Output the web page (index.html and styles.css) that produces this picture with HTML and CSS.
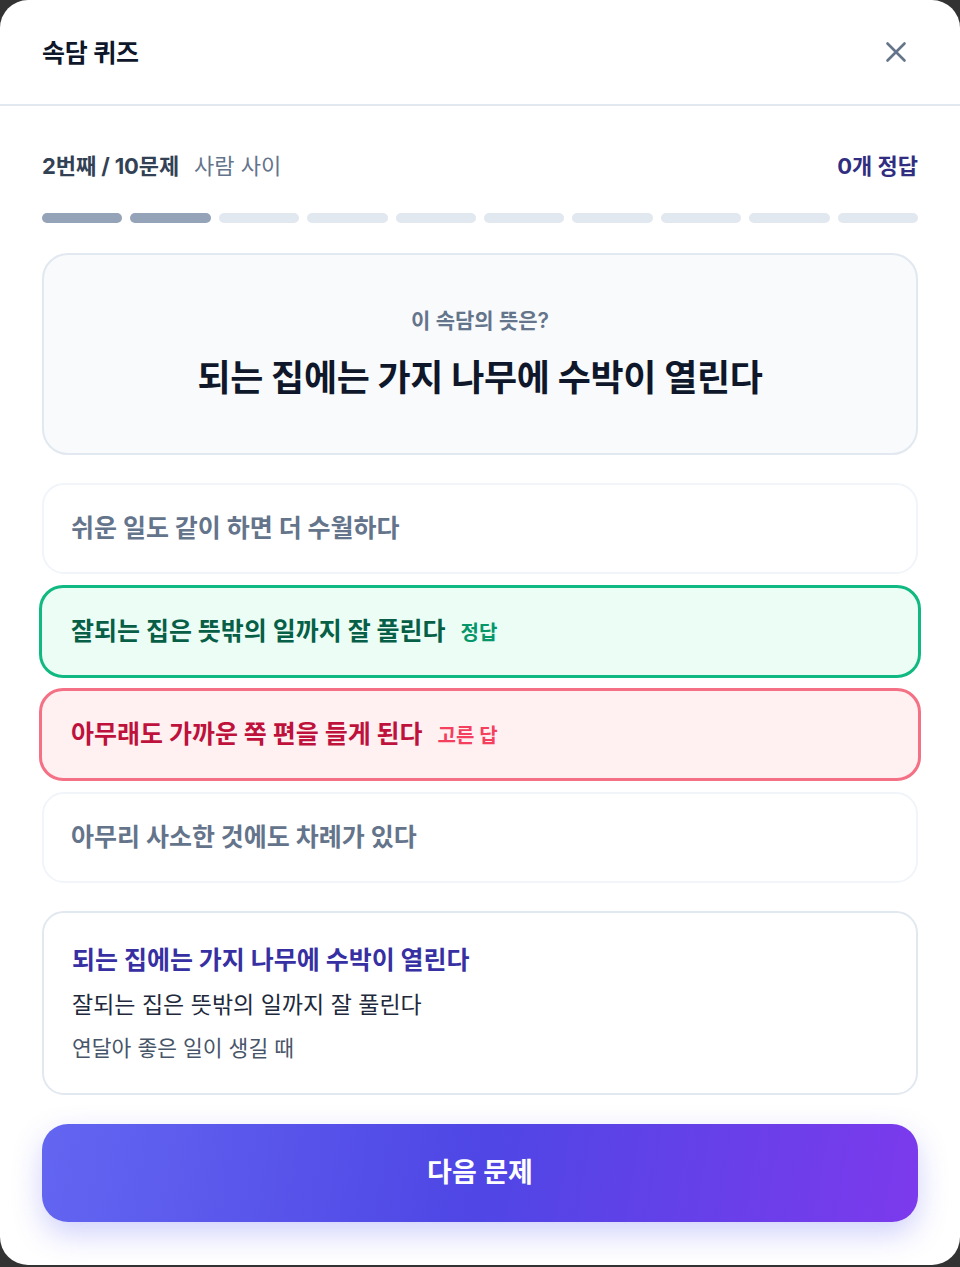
FILE: index.html
```html
<!DOCTYPE html>
<html lang="ko">
<head>
<meta charset="utf-8">
<title>속담 퀴즈</title>
<link rel="stylesheet" href="styles.css">
</head>
<body>
<div class="modal">
  <header class="modal-header">
    <h1 class="title">속담 퀴즈</h1>
    <button class="close" aria-label="닫기">
      <svg viewBox="0 0 22 22" width="22" height="22"><path d="M2.5 2.5 L19.5 19.5 M19.5 2.5 L2.5 19.5" stroke="#64748b" stroke-width="2.6" stroke-linecap="round" fill="none"/></svg>
    </button>
  </header>
  <main class="modal-body">
    <div class="progress-info">
      <div class="progress-left"><span class="count">2번째 / 10문제</span><span class="category">사람 사이</span></div>
      <div class="score">0개 정답</div>
    </div>
    <div class="progress-bar">
      <span class="seg done"></span><span class="seg done"></span><span class="seg"></span><span class="seg"></span><span class="seg"></span><span class="seg"></span><span class="seg"></span><span class="seg"></span><span class="seg"></span><span class="seg"></span>
    </div>
    <section class="question">
      <p class="question-label">이 속담의 뜻은?</p>
      <p class="proverb">되는 집에는 가지 나무에 수박이 열린다</p>
    </section>
    <div class="options">
      <div class="option">쉬운 일도 같이 하면 더 수월하다</div>
      <div class="option correct">잘되는 집은 뜻밖의 일까지 잘 풀린다<span class="tag">정답</span></div>
      <div class="option wrong">아무래도 가까운 쪽 편을 들게 된다<span class="tag">고른 답</span></div>
      <div class="option">아무리 사소한 것에도 차례가 있다</div>
    </div>
    <section class="explain">
      <p class="explain-title">되는 집에는 가지 나무에 수박이 열린다</p>
      <p class="explain-meaning">잘되는 집은 뜻밖의 일까지 잘 풀린다</p>
      <p class="explain-note">연달아 좋은 일이 생길 때</p>
    </section>
    <button class="next">다음 문제</button>
  </main>
</div>
</body>
</html>
```
FILE: styles.css
```css
* { box-sizing: border-box; }
html, body { margin: 0; padding: 0; }
body {
  background: #333333;
  font-family: Inter, "Noto Sans CJK KR", sans-serif;
  width: 960px;
  height: 1267px;
  overflow: hidden;
}
p { margin: 0; }
.modal {
  width: 960px;
  height: 1265px;
  background: #ffffff;
  border-radius: 28px;
  overflow: hidden;
}
.modal-header {
  height: 106px;
  border-bottom: 2px solid #e2e8f0;
  display: flex;
  align-items: center;
  justify-content: space-between;
  padding: 0 42px;
}
.title {
  margin: 0;
  font-size: 25px;
  font-weight: 700;
  color: #0f172a;
  letter-spacing: -0.2px;
  padding-bottom: 2px;
}
.close {
  border: 0;
  background: none;
  padding: 0;
  width: 22px;
  height: 22px;
  margin-right: 11px;
  display: flex;
}
.modal-body {
  padding: 42px 42px 0;
}
.progress-info {
  display: flex;
  justify-content: space-between;
  align-items: center;
  height: 32px;
}
.progress-left { display: flex; align-items: center; gap: 15px; }
.count { font-size: 22px; font-weight: 700; color: #334155; letter-spacing: -0.1px; }
.category { font-size: 22px; font-weight: 400; color: #64748b; }
.score { font-size: 22px; font-weight: 700; color: #312e81; letter-spacing: 0; }
.progress-bar {
  display: flex;
  gap: 8px;
  margin-top: 33px;
}
.seg {
  flex: 1;
  height: 10px;
  border-radius: 5px;
  background: #e2e8f0;
}
.seg.done { background: #94a3b8; }
.question {
  margin-top: 30px;
  height: 202px;
  background: #f8fafc;
  border: 2px solid #e2e8f0;
  border-radius: 26px;
  display: flex;
  flex-direction: column;
  align-items: center;
  padding-top: 50px;
}
.question-label {
  font-size: 21px;
  font-weight: 600;
  color: #64748b;
  line-height: 32px;
}
.proverb {
  margin-top: 17px;
  font-size: 36px;
  font-weight: 700;
  color: #0f172a;
  line-height: 48px;
  letter-spacing: -0.35px;
}
.options {
  margin-top: 28px;
  display: flex;
  flex-direction: column;
  gap: 12px;
}
.option {
  height: 91px;
  border: 2px solid #f1f5f9;
  border-radius: 22px;
  background: #ffffff;
  display: flex;
  align-items: center;
  padding: 0 27px 5px;
  font-size: 25px;
  font-weight: 700;
  color: #64748b;
  letter-spacing: 0;
}
.option .tag {
  margin-left: 15px;
  font-size: 20px;
  font-weight: 700;
  margin-top: 4px;
  letter-spacing: 0;
}
.option.correct,
.option.wrong {
  height: 93px;
  margin: -1px -3px;
  padding-left: 29px;
  border-width: 3px;
  border-radius: 24px;
}
.option.correct {
  border-color: #10b981;
  background: #ecfdf5;
  color: #065f46;
}
.option.correct .tag { color: #059669; }
.option.wrong {
  border-color: #f47185;
  background: #fff1f2;
  color: #be123c;
}
.option.wrong .tag { color: #f43f5e; }
.explain {
  margin-top: 28px;
  height: 184px;
  border: 2px solid #e2e8f0;
  border-radius: 22px;
  padding: 28px 28px 0;
}
.explain-title {
  font-size: 25px;
  font-weight: 700;
  color: #3730a3;
  line-height: 38px;
  letter-spacing: 0;
}
.explain-meaning {
  margin-top: 9px;
  font-size: 23px;
  color: #1e293b;
  line-height: 34px;
  letter-spacing: 0;
}
.explain-note {
  margin-top: 10px;
  font-size: 21.5px;
  color: #475569;
  line-height: 32px;
  letter-spacing: 0;
}
.next {
  margin-top: 29px;
  width: 100%;
  height: 98px;
  border: 0;
  border-radius: 26px;
  padding: 0 0 6px;
  background: linear-gradient(100deg, #6366f1 0%, #4f46e5 50%, #7c3aed 100%);
  box-shadow: 0 12px 30px rgba(99, 102, 241, 0.3);
  color: #ffffff;
  font-family: Inter, "Noto Sans CJK KR", sans-serif;
  font-size: 27px;
  font-weight: 700;
  letter-spacing: 0;
}
```
